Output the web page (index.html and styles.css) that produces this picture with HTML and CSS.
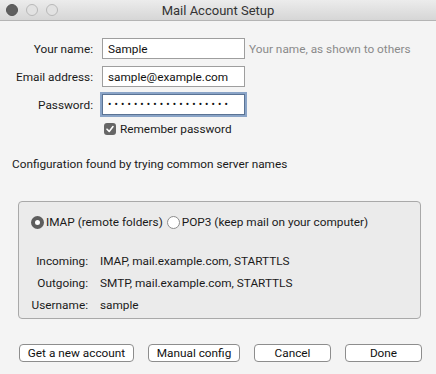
FILE: index.html
```html
<!DOCTYPE html>
<html lang="en">

<head>
	<meta charset="UTF-8">
	<meta name="viewport" content="width=device-width, initial-scale=1.0">
	<title>Mail Account Setup</title>
	<link rel="stylesheet" href="styles.css">
</head>

<body>
	<div class="window">
		<div class="titlebar">
			<div class="lights">
				<span class="light close"></span>
				<span class="light"></span>
				<span class="light"></span>
			</div>
			<div class="title">Mail Account Setup</div>
		</div>

		<div class="content">
			<div class="form">
				<label class="label" for="name">Your name:</label>
				<input class="field" type="text" id="name" value="Sample">
				<span class="hint">Your name, as shown to others</span>

				<label class="label" for="email">Email address:</label>
				<input class="field" type="text" id="email" value="sample@example.com">
				<span></span>

				<label class="label" for="password">Password:</label>
				<input class="field focused" type="password" id="password" value="samplepassword12345">
				<span></span>

				<span></span>
				<label class="check">
					<span class="checkbox">
						<svg width="10" height="10" viewBox="0 0 10 10">
							<path d="M2 5.2 L4.2 7.4 L8 2.6" fill="none" stroke="#fff" stroke-width="1.6" stroke-linecap="round" stroke-linejoin="round" />
						</svg>
					</span>
					Remember password
				</label>
				<span></span>
			</div>

			<p class="status">Configuration found by trying common server names</p>

			<div class="config">
				<div class="protocols">
					<label class="radio-option"><span class="radio checked"></span>IMAP (remote folders)</label>
					<label class="radio-option"><span class="radio"></span>POP3 (keep mail on your computer)</label>
				</div>
				<div class="servers">
					<span class="server-label">Incoming:</span>
					<span>IMAP, mail.example.com, STARTTLS</span>
					<span class="server-label">Outgoing:</span>
					<span>SMTP, mail.example.com, STARTTLS</span>
					<span class="server-label">Username:</span>
					<span>sample</span>
				</div>
			</div>

			<div class="buttons">
				<button class="btn wide">Get a new account</button>
				<button class="btn medium">Manual config</button>
				<button class="btn">Cancel</button>
				<button class="btn">Done</button>
			</div>
		</div>
	</div>
</body>

</html>
```

FILE: styles.css
```css
body {
	margin: 0;
	font-family: Roboto, "Liberation Sans", sans-serif;
	font-size: 11.8px;
	color: #1a1a1a;
	background-color: #f4f4f4;
}

.window {
	width: 436px;
	height: 374px;
	overflow: hidden;
}

.titlebar {
	height: 20px;
	display: flex;
	align-items: center;
	position: relative;
	background: linear-gradient(#ececec, #d6d6d6);
	border-bottom: 1px solid #b4b4b4;
}

.lights {
	display: flex;
	gap: 8px;
	padding-left: 6px;
}

.light {
	box-sizing: border-box;
	width: 12px;
	height: 12px;
	border-radius: 50%;
	border: 1px solid #b8b8b8;
	background: #e2e2e2;
}

.light.close {
	background: #5f5f5f;
	border-color: #555;
}

.title {
	position: absolute;
	left: 0;
	right: 0;
	text-align: center;
	font-size: 13px;
	color: #333;
}

.content {
	padding: 17px 0 0 0;
}

.form {
	display: grid;
	grid-template-columns: 93px 143px 1fr;
	column-gap: 9px;
	row-gap: 7px;
	align-items: center;
}

.label {
	text-align: right;
}

.field {
	box-sizing: border-box;
	height: 21px;
	width: 143px;
	margin: 0;
	padding: 0 5px;
	border: 1px solid #9e9e9e;
	background: #fff;
	font-family: inherit;
	font-size: 11.8px;
	color: #111;
	outline: none;
}

.field.focused {
	border: 1px solid #5a7394;
	box-shadow: 0 0 0 2px #8aa4c7;
	font-size: 10px;
	letter-spacing: 3.1px;
}

.hint {
	color: #8a8a8a;
	margin-left: -5px;
}

.check {
	display: flex;
	align-items: center;
	gap: 4px;
	padding-left: 2px;
}

.checkbox {
	width: 12px;
	height: 12px;
	border-radius: 3px;
	background: #666;
	display: flex;
	align-items: center;
	justify-content: center;
}

.status {
	margin: 21px 0 0 12px;
}

.config {
	margin: 30px 15px 0 18px;
	padding: 13px 0 5px 12px;
	height: 98px;
	background: #ebebeb;
	border: 1px solid #a9a9a9;
	border-radius: 4px;
}

.protocols {
	display: flex;
	gap: 4px;
}

.radio-option {
	display: flex;
	align-items: center;
	gap: 2px;
}

.radio {
	box-sizing: border-box;
	width: 13px;
	height: 13px;
	border-radius: 50%;
	border: 1px solid #8c8c8c;
	background: #fff;
}

.radio.checked {
	border: 4px solid #5e5e5e;
	background: #fff;
}

.servers {
	display: grid;
	grid-template-columns: 57px 1fr;
	column-gap: 12px;
	row-gap: 7px;
	margin-top: 25px;
	line-height: 15px;
}

.server-label {
	text-align: right;
}

.buttons {
	display: flex;
	gap: 14px;
	margin: 25px 0 0 19px;
}

.btn {
	box-sizing: border-box;
	width: 77px;
	height: 18px;
	padding: 0;
	border: 1px solid #8d8d8d;
	border-radius: 4px;
	background: #fff;
	font-family: inherit;
	font-size: 11.8px;
	color: #111;
}

.btn.wide {
	width: 115px;
}

.btn.medium {
	width: 92px;
}
```
